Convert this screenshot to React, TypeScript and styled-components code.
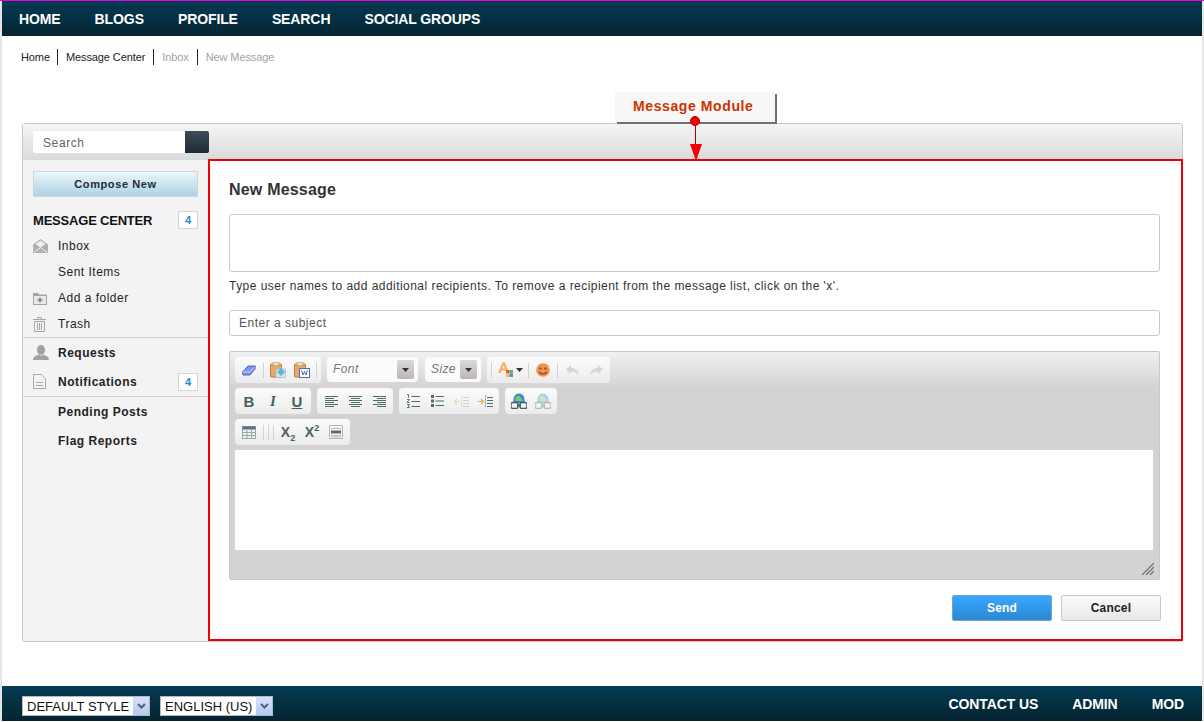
import styled, { createGlobalStyle } from "styled-components";
import type { ReactNode } from "react";

const GlobalStyle = createGlobalStyle`
  html, body {
    margin: 0;
    padding: 0;
    background: #e6e6e6;
  }
  * {
    box-sizing: border-box;
  }
`;

const navLinks = ["HOME", "BLOGS", "PROFILE", "SEARCH", "SOCIAL GROUPS"];
const footerLinks = ["CONTACT US", "ADMIN", "MOD"];
const crumbs = [
  { label: "Home", muted: false },
  { label: "Message Center", muted: false },
  { label: "Inbox", muted: true },
  { label: "New Message", muted: true },
];

function EnvelopeIcon() {
  return (
    <svg width="15" height="14" viewBox="0 0 15 14">
      <path d="M0 5.5 L7.5 0 L15 5.5 V14 H0 Z" fill="#b0b0b0" />
      <path d="M2.5 5 L7.5 1.5 L12.5 5 L7.5 8.5 Z" fill="#f0f0f0" />
      <path d="M1 13.5 L7.5 8.5 L14 13.5" stroke="#f3f3f3" strokeWidth="1" fill="none" />
    </svg>
  );
}

function FolderIcon() {
  return (
    <svg width="14" height="13" viewBox="0 0 14 13">
      <path d="M0 1 H5 L6 2.5 H14 V13 H0 Z" fill="#a4a4a4" />
      <rect x="1" y="4" width="12" height="8" fill="#e8e8e8" />
      <path d="M7 5.5 V10.5 M4.5 8 H9.5" stroke="#7f7f7f" strokeWidth="1.4" />
    </svg>
  );
}

function TrashIcon() {
  return (
    <svg width="13" height="15" viewBox="0 0 13 15" fill="none" stroke="#a8a8a8">
      <path d="M0 2.5 H13 M4.5 2.5 V0.5 H8.5 V2.5" />
      <path d="M1.5 4.5 H11.5 V14.5 H1.5 Z" />
      <path d="M4.5 6 V13 M6.5 6 V13 M8.5 6 V13" />
    </svg>
  );
}

function UserIcon() {
  return (
    <svg width="16" height="15" viewBox="0 0 16 15">
      <ellipse cx="8" cy="5" rx="4" ry="5" fill="#a2a2a2" />
      <path d="M0 15 C0 11 4 10.5 6 9.5 L8 11 L10 9.5 C12 10.5 16 11 16 15 Z" fill="#a2a2a2" />
    </svg>
  );
}

function NoteIcon() {
  return (
    <svg width="13" height="15" viewBox="0 0 13 15" fill="none" stroke="#a8a8a8">
      <path d="M0.5 0.5 H8.5 L12.5 4.5 V14.5 H0.5 Z" />
      <path d="M3 8.5 H10 M3 11.5 H10" />
    </svg>
  );
}

function EraserIcon() {
  return (
    <svg width="14" height="11" viewBox="0 0 14 11">
      <path d="M0.5 7 L6 1 H13.5 L13 4 L8 10 H1 Z" fill="#7f95ee" stroke="#3848a8" strokeWidth="0.8" />
      <path d="M0.8 7 H8 L13.3 1.4" stroke="#dfe5fb" fill="none" strokeWidth="0.8" />
    </svg>
  );
}

function PasteIcon({ word }: { word?: boolean }) {
  return (
    <svg width="16" height="16" viewBox="0 0 16 16">
      <rect x="0.5" y="2" width="11" height="13" rx="1" fill="#e8a766" stroke="#b98049" />
      <rect x="3" y="0.5" width="6" height="3" fill="#efe4cf" stroke="#a89878" strokeWidth="0.6" />
      {word ? (
        <>
          <rect x="5.5" y="6.5" width="10" height="9" fill="#fff" stroke="#4a6fd0" />
          <path d="M7.5 8.5 L9 13 L10.5 9.5 L12 13 L13.5 8.5" fill="none" stroke="#47606b" strokeWidth="0.9" />
        </>
      ) : (
        <>
          <rect x="6" y="7" width="9.5" height="8.5" fill="#d6e4ee" stroke="#9ab3c2" strokeWidth="0.6" />
          <path d="M7 10 L11 6 L15 10 L11 14 Z" fill="#58b6e6" />
        </>
      )}
    </svg>
  );
}

function ArrowDown() {
  return (
    <svg width="7" height="4" viewBox="0 0 7 4">
      <path d="M0 0 H7 L3.5 4 Z" fill="#333" />
    </svg>
  );
}

function TextColorIcon() {
  return (
    <svg width="16" height="16" viewBox="0 0 16 16">
      <path d="M0 11 L4.5 0.5 H7 L11 11 H8.5 L7.6 8.5 H3.6 L2.7 11 Z M4.4 6.5 H6.9 L5.7 3 Z" fill="#f4b15f" />
      <rect x="8" y="8" width="3.5" height="3.5" fill="#e2574c" />
      <rect x="11.5" y="8" width="3.5" height="3.5" fill="#5cb85c" />
      <rect x="8" y="11.5" width="3.5" height="3.5" fill="#f5c542" />
      <rect x="11.5" y="11.5" width="3.5" height="3.5" fill="#4a90e2" />
    </svg>
  );
}

function SmileyIcon() {
  return (
    <svg width="14" height="14" viewBox="0 0 14 14">
      <circle cx="7" cy="7" r="6.8" fill="#f0954e" />
      <rect x="3" y="4.5" width="3" height="2" fill="#b5562a" />
      <rect x="8" y="4.5" width="3" height="2" fill="#b5562a" />
      <path d="M3 9 C5 11.5 9 11.5 11 9" stroke="#a83a20" strokeWidth="1.4" fill="none" />
    </svg>
  );
}

function UndoIcon({ flip }: { flip?: boolean }) {
  return (
    <svg width="13" height="10" viewBox="0 0 13 10" style={flip ? { transform: "scaleX(-1)" } : undefined}>
      <path d="M0 4.5 L5 0 V3 C9 3 12 5 13 10 C11 7.5 8.5 6.5 5 6.5 V9 Z" fill="#cfd8d8" />
    </svg>
  );
}

const lineColor = "#4f6b6b";

function BarLines({ rows }: { rows: number[][] }) {
  return (
    <svg width="13" height="13" viewBox="0 0 13 13" stroke={lineColor} strokeWidth="1">
      {rows.map(([x1, x2], i) => (
        <line key={i} x1={x1} x2={x2} y1={i * 2 + 1.5} y2={i * 2 + 1.5} />
      ))}
    </svg>
  );
}

function OrderedIcon() {
  return (
    <svg width="14" height="14" viewBox="0 0 14 14" stroke={lineColor}>
      <path d="M5.5 2.5 H14 M5.5 7.5 H14 M5.5 12.5 H14" />
      <path d="M1 0.5 H2.5 V4 M1 5.5 H3.5 L1 8.5 H3.5 M1 10.5 H3.5 L2 12 L3.5 13.5 H1" fill="none" strokeWidth="0.9" />
    </svg>
  );
}

function BulletIcon() {
  return (
    <svg width="13" height="12" viewBox="0 0 13 12" stroke={lineColor}>
      <path d="M4.5 1.5 H13 M4.5 6 H13 M4.5 10.5 H13" />
      <rect x="0" y="0" width="3" height="3" fill={lineColor} stroke="none" />
      <rect x="0" y="4.5" width="3" height="3" fill={lineColor} stroke="none" />
      <rect x="0" y="9" width="3" height="3" fill={lineColor} stroke="none" />
    </svg>
  );
}

function IndentIcon({ outdent }: { outdent?: boolean }) {
  const ink = outdent ? "#c9d3d3" : lineColor;
  return (
    <svg width="15" height="13" viewBox="0 0 15 13" stroke={ink}>
      <path d="M7.5 0.5 V12.5" strokeDasharray="1 1" />
      <path d="M9 2.5 H15 M9 5.5 H15 M9 8.5 H15 M9 11.5 H15" />
      <path
        d={outdent ? "M0.5 6.5 H6 M3 4 L0.5 6.5 L3 9" : "M0 6.5 H5.5 M3 4 L5.5 6.5 L3 9"}
        stroke={outdent ? "#f8d4b0" : "#f4a54a"}
        strokeWidth="1.2"
        fill="none"
      />
    </svg>
  );
}

function LinkIcon({ faded }: { faded?: boolean }) {
  return (
    <svg width="16" height="16" viewBox="0 0 16 16" opacity={faded ? 0.35 : 1}>
      <path d="M2.5 10 C2 4 4 0.5 8 0.5 C12 0.5 14 4 13.5 10 Z" fill="#3f7fe0" />
      <path d="M4 6 C5 3 7 2 8.5 3 C10 4.5 11 6 12 8 H5 Z" fill="#6fd06a" />
      <rect x="0" y="9.5" width="7" height="6" rx="2" fill="none" stroke="#466060" strokeWidth="1.4" />
      <rect x="9" y="9.5" width="7" height="6" rx="2" fill="none" stroke="#466060" strokeWidth="1.4" />
      <rect x="6" y="11.5" width="4" height="2" fill="#466060" />
    </svg>
  );
}

function TableIcon() {
  return (
    <svg width="14" height="13" viewBox="0 0 14 13" stroke="#9aa7a7" fill="#eef1f1">
      <rect x="0.5" y="0.5" width="13" height="12" />
      <rect x="0.5" y="0.5" width="13" height="3" fill="#5a6f8f" stroke="none" />
      <path d="M5 3.5 V12.5 M9.5 3.5 V12.5 M0.5 6.5 H13.5 M0.5 9.5 H13.5" />
    </svg>
  );
}

function RuleIcon() {
  return (
    <svg width="14" height="14" viewBox="0 0 14 14" stroke="#b5baba" fill="#f7f7f7">
      <rect x="0.5" y="0.5" width="13" height="13" />
      <path d="M2 3.5 H12 M2 10.5 H12 M2 12 H12" />
      <rect x="2" y="5.5" width="10" height="3" fill="#5a6b6b" stroke="none" />
    </svg>
  );
}

function Chevron() {
  return (
    <svg width="9" height="6" viewBox="0 0 9 6">
      <path d="M1 1 L4.5 4.5 L8 1" fill="none" stroke="#4d6185" strokeWidth="2" />
    </svg>
  );
}

function Row({ icon, bold, badge, children }: { icon?: ReactNode; bold?: boolean; badge?: string; children: ReactNode }) {
  return (
    <SideRow $bold={bold}>
      <SideIcon>{icon}</SideIcon>
      <SideLabel>{children}</SideLabel>
      {badge && <Badge>{badge}</Badge>}
    </SideRow>
  );
}

export default function App() {
  return (
    <Page>
      <GlobalStyle />
      <Shell>
        <TopNav>
          {navLinks.map((link) => (
            <NavLink key={link}>{link}</NavLink>
          ))}
        </TopNav>

        <Breadcrumbs>
          {crumbs.map((crumb) => (
            <Crumb key={crumb.label} $muted={crumb.muted}>
              {crumb.label}
            </Crumb>
          ))}
        </Breadcrumbs>

        <Content>
          <Callout>
            Message Module
            <CalloutPin />
            <CalloutLine />
            <CalloutArrow />
          </Callout>
          <Card>
            <SearchBar>
              <SearchBox>Search</SearchBox>
              <SearchButton />
            </SearchBar>
            <CardBody>
              <Sidebar>
                <ComposeButton>Compose New</ComposeButton>
                <SideHeading>
                  <span>MESSAGE CENTER</span>
                  <Badge>4</Badge>
                </SideHeading>
                <Row icon={<EnvelopeIcon />}>Inbox</Row>
                <Row>Sent Items</Row>
                <Row icon={<FolderIcon />}>Add a folder</Row>
                <Row icon={<TrashIcon />}>Trash</Row>
                <SideSection>
                  <Row bold icon={<UserIcon />}>Requests</Row>
                  <Row bold icon={<NoteIcon />} badge="4">Notifications</Row>
                </SideSection>
                <SideSection>
                  <Row bold>Pending Posts</Row>
                  <Row bold>Flag Reports</Row>
                </SideSection>
              </Sidebar>

              <Main>
                <Title>New Message</Title>
                <RecipientBox />
                <Hint>Type user names to add additional recipients. To remove a recipient from the message list, click on the 'x'.</Hint>
                <SubjectBox>Enter a subject</SubjectBox>

                <Editor>
                  <EditorBar>
                    <ToolRow>
                      <ToolGroup>
                        <Tool><EraserIcon /></Tool>
                        <ToolSep />
                        <Tool><PasteIcon /></Tool>
                        <Tool><PasteIcon word /></Tool>
                        <ToolSep />
                      </ToolGroup>
                      <Combo $width={91}>
                        Font
                        <ComboArrow><ArrowDown /></ComboArrow>
                      </Combo>
                      <Combo $width={56}>
                        Size
                        <ComboArrow><ArrowDown /></ComboArrow>
                      </Combo>
                      <ToolGroup>
                        <ToolSep />
                        <Tool $wide><TextColorIcon /><ArrowDown /></Tool>
                        <ToolSep />
                        <Tool><SmileyIcon /></Tool>
                        <ToolSep />
                        <Tool><UndoIcon /></Tool>
                        <Tool><UndoIcon flip /></Tool>
                      </ToolGroup>
                    </ToolRow>
                    <ToolRow>
                      <ToolGroup>
                        <Tool><Glyph>B</Glyph></Tool>
                        <Tool><Glyph $italic>I</Glyph></Tool>
                        <Tool><Glyph $underline>U</Glyph></Tool>
                      </ToolGroup>
                      <ToolGroup>
                        <Tool><BarLines rows={[[0, 13], [0, 9], [0, 13], [0, 9], [0, 13], [0, 9]]} /></Tool>
                        <Tool><BarLines rows={[[0, 13], [2, 11], [0, 13], [2, 11], [0, 13], [2, 11]]} /></Tool>
                        <Tool><BarLines rows={[[0, 13], [4, 13], [0, 13], [4, 13], [0, 13], [4, 13]]} /></Tool>
                      </ToolGroup>
                      <ToolGroup>
                        <Tool><OrderedIcon /></Tool>
                        <Tool><BulletIcon /></Tool>
                        <Tool><IndentIcon outdent /></Tool>
                        <Tool><IndentIcon /></Tool>
                      </ToolGroup>
                      <ToolGroup>
                        <Tool><LinkIcon /></Tool>
                        <Tool><LinkIcon faded /></Tool>
                      </ToolGroup>
                    </ToolRow>
                    <ToolRow>
                      <ToolGroup>
                        <Tool><TableIcon /></Tool>
                        <ToolSep />
                        <ToolSep />
                        <ToolSep />
                        <Tool><Script>X<sub>2</sub></Script></Tool>
                        <Tool><Script>X<sup>2</sup></Script></Tool>
                        <Tool><RuleIcon /></Tool>
                      </ToolGroup>
                    </ToolRow>
                  </EditorBar>
                  <EditorArea />
                  <EditorFoot>
                    <svg width="12" height="12" viewBox="0 0 12 12" stroke="#666" strokeWidth="1.2">
                      <path d="M0 12 L12 0 M4 12 L12 4 M8 12 L12 8" />
                    </svg>
                  </EditorFoot>
                </Editor>

                <Actions>
                  <ActionButton $primary>Send</ActionButton>
                  <ActionButton>Cancel</ActionButton>
                </Actions>
              </Main>
            </CardBody>
          </Card>
        </Content>

        <Footer>
          <FakeSelect $width={128}>
            DEFAULT STYLE
            <SelectArrow><Chevron /></SelectArrow>
          </FakeSelect>
          <FakeSelect $width={113}>
            ENGLISH (US)
            <SelectArrow><Chevron /></SelectArrow>
          </FakeSelect>
          <FooterLinks>
            {footerLinks.map((link) => (
              <NavLink key={link}>{link}</NavLink>
            ))}
          </FooterLinks>
        </Footer>
      </Shell>
    </Page>
  );
}

const Page = styled.div`
  width: 1204px;
  height: 722px;
  overflow: hidden;
  padding: 0 2px;
  border-top: 1px solid #f000e0;
  font-family: "Liberation Sans", Arial, sans-serif;
`;

const Shell = styled.div`
  height: 721px;
  padding-bottom: 1px;
  background: #fff;
  display: flex;
  flex-direction: column;
`;

const TopNav = styled.nav`
  height: 35px;
  flex: none;
  display: flex;
  align-items: center;
  gap: 34px;
  padding-left: 17px;
  background: linear-gradient(#043b55, #04242f);
`;

const NavLink = styled.a`
  color: #fff;
  font-size: 14px;
  font-weight: bold;
  letter-spacing: -0.1px;
`;

const Breadcrumbs = styled.div`
  height: 16px;
  margin: 13px 0 0 19px;
  flex: none;
  display: flex;
`;

const Crumb = styled.span<{ $muted: boolean }>`
  font-size: 11px;
  line-height: 16px;
  letter-spacing: -0.1px;
  color: ${(p) => (p.$muted ? "#a3a3a3" : "#222")};
  padding: 0 8px;
  border-left: 1px solid #222;

  &:first-child {
    border-left: 0;
    padding: 0 7px 0 0;
  }
`;

const Content = styled.div`
  position: relative;
  flex: 1;
  padding: 58px 19px 0 20px;
`;

const Callout = styled.div`
  position: absolute;
  left: 613px;
  top: 27px;
  width: 160px;
  height: 30px;
  padding-left: 18px;
  z-index: 2;
  background: #f7f7f7;
  box-shadow: 2px 2px 0 #707070;
  color: #cc3300;
  font-size: 14px;
  font-weight: bold;
  letter-spacing: 0.6px;
  line-height: 28px;
`;

const CalloutPin = styled.span`
  position: absolute;
  left: 75px;
  top: 24px;
  width: 10px;
  height: 10px;
  border-radius: 50%;
  background: #f00000;
  border: 1px solid #b00000;
`;

const CalloutLine = styled.span`
  position: absolute;
  left: 80px;
  top: 33px;
  width: 1px;
  height: 20px;
  background: #b00000;
`;

const CalloutArrow = styled.span`
  position: absolute;
  left: 75px;
  top: 52px;
  width: 0;
  height: 0;
  border-left: 6px solid transparent;
  border-right: 6px solid transparent;
  border-top: 17px solid #f00000;
`;

const Card = styled.div`
  width: 1161px;
  height: 519px;
  border: 1px solid #c8c8c8;
  border-radius: 3px;
  background: #f3f3f3;
  display: flex;
  flex-direction: column;
`;

const SearchBar = styled.div`
  height: 36px;
  flex: none;
  display: flex;
  padding: 7px 0 0 10px;
  background: linear-gradient(#f5f5f5, #d8dadc);
`;

const SearchBox = styled.div`
  width: 152px;
  height: 22px;
  padding-left: 10px;
  background: #fff;
  border-radius: 2px 0 0 2px;
  color: #666;
  font-size: 12px;
  letter-spacing: 0.6px;
  line-height: 24px;
`;

const SearchButton = styled.div`
  width: 24px;
  height: 22px;
  border-radius: 0 2px 2px 0;
  background: linear-gradient(#3f4b59, #1e2a33);
`;

const CardBody = styled.div`
  flex: 1;
  display: flex;
  min-height: 0;
`;

const Sidebar = styled.aside`
  width: 185px;
  flex: none;
  padding-top: 11px;
`;

const ComposeButton = styled.div`
  width: 165px;
  height: 26px;
  margin-left: 10px;
  border: 1px solid #c9d6dc;
  background: linear-gradient(#eaf7fd, #aed2e2);
  color: #222c33;
  font-size: 11px;
  font-weight: bold;
  letter-spacing: 0.6px;
  text-align: center;
  line-height: 25px;
`;

const SideHeading = styled.div`
  height: 18px;
  margin: 14px 10px 4px;
  display: flex;
  align-items: center;
  justify-content: space-between;
  color: #111;
  font-size: 13px;
  font-weight: bold;
  letter-spacing: -0.2px;
`;

const Badge = styled.span`
  width: 20px;
  height: 18px;
  border: 1px solid #d6d6d6;
  background: #fff;
  color: #1a8ac8;
  font-size: 11px;
  font-weight: bold;
  text-align: center;
  line-height: 16px;
  letter-spacing: 0;
`;

const SideRow = styled.div<{ $bold?: boolean }>`
  height: ${(p) => (p.$bold ? "29px" : "26px")};
  padding: 0 10px;
  display: flex;
  align-items: center;
  color: #222;
  font-size: 12px;
  letter-spacing: 0.5px;
  font-weight: ${(p) => (p.$bold ? "bold" : "normal")};
`;

const SideIcon = styled.span`
  width: 25px;
  flex: none;
  display: flex;
  justify-content: flex-start;
`;

const SideLabel = styled.span`
  flex: 1;
`;

const SideSection = styled.div`
  border-top: 1px solid #cfcfcf;
`;

const Main = styled.main`
  flex: 1;
  margin: -1px -1px 0 0;
  padding: 0 21px 0 19px;
  border: 2px solid #f00000;
  background: #fff;
  display: flex;
  flex-direction: column;
`;

const Title = styled.h2`
  margin: 20px 0 0;
  height: 18px;
  color: #333;
  font-size: 16px;
  font-weight: bold;
  letter-spacing: 0.2px;
  line-height: 18px;
`;

const RecipientBox = styled.div`
  height: 58px;
  margin-top: 15px;
  border: 1px solid #c8c8c8;
  border-radius: 3px;
`;

const Hint = styled.p`
  margin: 6px 0 0;
  height: 16px;
  color: #333;
  font-size: 12px;
  letter-spacing: 0.46px;
  line-height: 16px;
`;

const SubjectBox = styled.div`
  height: 26px;
  margin-top: 16px;
  padding-left: 9px;
  border: 1px solid #c8c8c8;
  border-radius: 3px;
  color: #555;
  font-size: 12px;
  letter-spacing: 0.5px;
  line-height: 25px;
`;

const Editor = styled.div`
  height: 229px;
  margin-top: 15px;
  padding: 0 6px;
  border: 1px solid #c8c8c8;
  border-radius: 2px;
  background: #d3d3d3;
  display: flex;
  flex-direction: column;
`;

const EditorBar = styled.div`
  margin: 0 -6px;
  padding: 5px;
  flex: none;
  display: flex;
  flex-direction: column;
  gap: 5px;
  background: linear-gradient(#f0f0f0, #d3d3d3 36px);
`;

const ToolRow = styled.div`
  display: flex;
  gap: 6px;
  height: 26px;
`;

const ToolGroup = styled.div`
  height: 26px;
  padding: 0 2px;
  display: flex;
  align-items: center;
  border-radius: 4px;
  background: linear-gradient(#fbfbfb, #ececec);
`;

const Tool = styled.span<{ $wide?: boolean }>`
  width: ${(p) => (p.$wide ? "32px" : "24px")};
  height: 22px;
  display: flex;
  align-items: center;
  justify-content: center;
  gap: 2px;
`;

const ToolSep = styled.span`
  width: 1px;
  height: 15px;
  margin: 0 2px;
  background: #cfd2d2;
`;

const Combo = styled.div<{ $width: number }>`
  position: relative;
  width: ${(p) => p.$width}px;
  height: 25px;
  padding-left: 6px;
  border-radius: 4px;
  background: #fbfbfb;
  color: #777;
  font-size: 12px;
  font-style: italic;
  letter-spacing: 0.4px;
  line-height: 25px;

  & + & {
    margin-left: 1px;
  }
`;

const ComboArrow = styled.span`
  position: absolute;
  right: 4px;
  top: 3px;
  width: 17px;
  height: 19px;
  display: flex;
  align-items: center;
  justify-content: center;
  border-radius: 2px;
  background: linear-gradient(#dcd8d8, #bdb6b6);
`;

const Glyph = styled.span<{ $italic?: boolean; $underline?: boolean }>`
  color: #466060;
  font-size: 15px;
  font-weight: bold;
  font-style: ${(p) => (p.$italic ? "italic" : "normal")};
  font-family: ${(p) => (p.$italic ? '"Liberation Serif", serif' : '"Liberation Sans", Arial, sans-serif')};
  text-decoration: ${(p) => (p.$underline ? "underline" : "none")};
`;

const Script = styled.span`
  color: #466060;
  font-size: 14px;
  font-weight: bold;

  sub, sup {
    font-size: 9px;
    line-height: 0;
  }
`;

const EditorArea = styled.div`
  height: 100px;
  flex: none;
  background: #fff;
  margin-left: -1px;
`;

const EditorFoot = styled.div`
  flex: 1;
  display: flex;
  align-items: flex-end;
  justify-content: flex-end;
  padding-bottom: 4px;
  margin-right: -1px;
`;

const Actions = styled.div`
  margin: 15px -1px 0 0;
  display: flex;
  justify-content: flex-end;
  gap: 9px;
`;

const ActionButton = styled.div<{ $primary?: boolean }>`
  width: 100px;
  height: 26px;
  border: 1px solid ${(p) => (p.$primary ? "#6aa5d6" : "#c8c8c8")};
  border-radius: 2px;
  background: ${(p) => (p.$primary ? "linear-gradient(#3aa7ff, #2c87d0)" : "linear-gradient(#fbfbfb, #e6e8ea)")};
  color: ${(p) => (p.$primary ? "#fff" : "#222")};
  font-size: 12px;
  font-weight: bold;
  letter-spacing: 0.2px;
  text-align: center;
  line-height: 25px;
`;

const Footer = styled.footer`
  height: 35px;
  flex: none;
  padding: 0 18px 0 20px;
  display: flex;
  align-items: center;
  gap: 10px;
  background: linear-gradient(#043b55, #04242f);
`;

const FooterLinks = styled.div`
  margin-left: auto;
  display: flex;
  gap: 34px;
`;

const FakeSelect = styled.div<{ $width: number }>`
  position: relative;
  width: ${(p) => p.$width}px;
  height: 20px;
  margin-top: 5px;
  padding-left: 4px;
  border: 1px solid #b4b8c0;
  background: #fff;
  color: #111;
  font-size: 13px;
  line-height: 19px;
  white-space: nowrap;
`;

const SelectArrow = styled.span`
  position: absolute;
  right: 0;
  top: 0;
  width: 16px;
  height: 18px;
  display: flex;
  align-items: center;
  justify-content: center;
  background: linear-gradient(#d6e2fb, #b4c8f0);
`;
